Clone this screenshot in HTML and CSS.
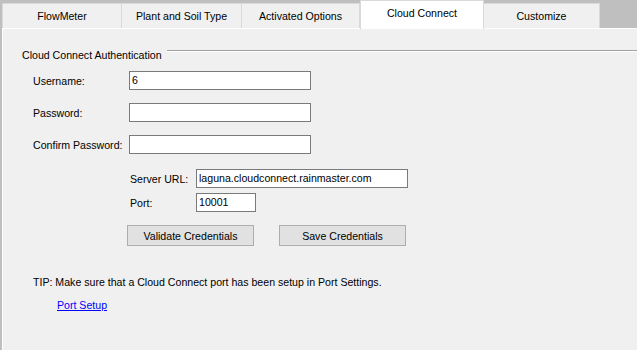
FILE: index.html
```html
<!DOCTYPE html>
<html>
<head>
<meta charset="utf-8">
<link rel="stylesheet" href="styles.css">
</head>
<body>
<div class="tabs">
  <div class="tab t1">FlowMeter</div>
  <div class="tab t2">Plant and Soil Type</div>
  <div class="tab t3">Activated Options</div>
  <div class="tab sel">Cloud Connect</div>
  <div class="tab t5">Customize</div>
</div>
<div class="panel">
  <div class="group-head">
    <span class="group-title">Cloud Connect Authentication</span>
    <span class="group-line"></span>
  </div>
  <div class="cred">
    <div class="row"><label class="lbl">Username:</label><div class="box wide">6</div></div>
    <div class="row"><label class="lbl">Password:</label><div class="box wide"></div></div>
    <div class="row"><label class="lbl">Confirm Password:</label><div class="box wide"></div></div>
  </div>
  <div class="server">
    <div class="row srow"><label class="slbl">Server URL:</label><div class="box url">laguna.cloudconnect.rainmaster.com</div></div>
    <div class="row srow port-row"><label class="slbl">Port:</label><div class="box port">10001</div></div>
  </div>
  <div class="buttons">
    <button class="btn">Validate Credentials</button>
    <button class="btn">Save Credentials</button>
  </div>
  <p class="tip">TIP: Make sure that a Cloud Connect port has been setup in Port Settings.</p>
  <a class="link" href="#">Port Setup</a>
</div>
</body>
</html>
```

FILE: styles.css
```css
* { box-sizing: border-box; }
html, body { margin: 0; padding: 0; }
body {
  width: 637px;
  height: 350px;
  overflow: hidden;
  background: #bfbfbf;
  font-family: "Liberation Sans", Arial, sans-serif;
  font-size: 10.6px;
  color: #000;
}
.tabs {
  display: flex;
  align-items: flex-end;
  height: 28px;
  padding-left: 2px;
}
.tab {
  height: 25px;
  background: #f0f0f0;
  border: 1px solid #d9d9d9;
  border-bottom: none;
  border-left: none;
  display: flex;
  align-items: center;
  justify-content: center;
  padding-bottom: 1px;
  white-space: nowrap;
}
.t1 { width: 120px; border-left: 1px solid #d9d9d9; }
.t2 { width: 120px; }
.t3 { width: 118px; }
.sel {
  width: 124px;
  height: 29px;
  margin-bottom: -1px;
  background: #fff;
  border: 1px solid #d9d9d9;
  border-bottom: none;
  padding-bottom: 5px;
  position: relative;
  z-index: 1;
}
.t5 { width: 116px; }
.panel {
  height: 322px;
  margin-left: 2px;
  background: #f0f0f0;
  border-top: 1px solid #fff;
  border-left: 1px solid #fff;
  padding: 20px 0 0 19px;
}
.group-head {
  display: flex;
  align-items: flex-start;
  height: 13px;
  line-height: 13px;
}
.group-title { white-space: nowrap; }
.group-line {
  flex: 1;
  height: 2px;
  margin-left: 5px;
  margin-top: 1px;
  border-top: 1px solid #a0a0a0;
  border-bottom: 1px solid #fff;
}
.cred {
  margin-top: 9px;
  margin-left: 11px;
  display: flex;
  flex-direction: column;
  gap: 13px;
}
.row {
  display: flex;
  align-items: center;
  height: 19px;
}
.lbl { width: 96px; }
.box {
  height: 19px;
  background: #fff;
  border: 1px solid #7a7a7a;
  padding: 0 2px;
  line-height: 17px;
  white-space: nowrap;
}
.wide { width: 182px; }
.server {
  margin-top: 15px;
  margin-left: 108px;
}
.slbl { width: 66px; }
.url { width: 212px; }
.port-row { margin-top: 5px; }
.port { width: 60px; }
.buttons {
  display: flex;
  gap: 25px;
  margin-top: 13px;
  margin-left: 105px;
}
.btn {
  width: 127px;
  height: 21px;
  background: #e1e1e1;
  border: 1px solid #adadad;
  font-family: "Liberation Sans", Arial, sans-serif;
  font-size: 10.6px;
  color: #000;
  padding: 0;
}
.tip {
  margin: 30px 0 0 11px;
  line-height: 13px;
}
.link {
  display: inline-block;
  margin: 10px 0 0 35px;
  line-height: 13px;
  color: #0000ff;
  text-decoration: underline;
}
```
